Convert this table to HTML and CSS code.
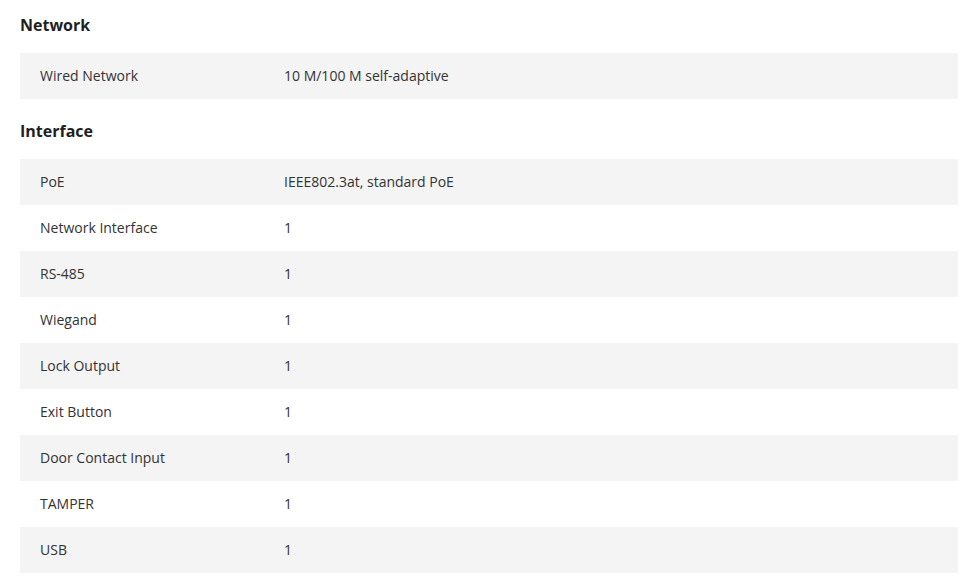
FILE: index.html
```html
<!DOCTYPE html>
<html lang="en">
<head>
<meta charset="utf-8">
<title>Specifications</title>
<link rel="stylesheet" href="styles.css">
</head>
<body>
<div class="specs">
  <h3 class="group-title">Network</h3>
  <div class="table">
    <div class="row"><div class="label">Wired Network</div><div class="value">10 M/100 M self-adaptive</div></div>
  </div>
  <h3 class="group-title">Interface</h3>
  <div class="table">
    <div class="row"><div class="label">PoE</div><div class="value">IEEE802.3at, standard PoE</div></div>
    <div class="row"><div class="label">Network Interface</div><div class="value">1</div></div>
    <div class="row"><div class="label">RS-485</div><div class="value">1</div></div>
    <div class="row"><div class="label">Wiegand</div><div class="value">1</div></div>
    <div class="row"><div class="label">Lock Output</div><div class="value">1</div></div>
    <div class="row"><div class="label">Exit Button</div><div class="value">1</div></div>
    <div class="row"><div class="label">Door Contact Input</div><div class="value">1</div></div>
    <div class="row"><div class="label">TAMPER</div><div class="value">1</div></div>
    <div class="row"><div class="label">USB</div><div class="value">1</div></div>
  </div>
</div>
</body>
</html>
```
FILE: styles.css
```css
html, body {
  margin: 0;
  padding: 0;
  background: #fff;
}
body {
  font-family: "Open Sans", "Noto Sans", sans-serif;
  color: #333;
}
.specs {
  width: 938px;
  padding: 13px 0 0 20px;
}
.group-title {
  margin: 0 0 16px;
  font-size: 16px;
  line-height: 24px;
  font-weight: 700;
  color: #1f1f1f;
}
.table + .group-title {
  margin-top: 20px;
}
.table {
  display: flex;
  flex-direction: column;
}
.row {
  box-sizing: border-box;
  display: flex;
  align-items: center;
  height: 46px;
  padding-bottom: 2px;
  font-size: 14px;
}
.row:nth-child(odd) {
  background: #f4f4f4;
}
.label {
  width: 244px;
  padding-left: 20px;
}
.value {
  flex: 1;
}
```
